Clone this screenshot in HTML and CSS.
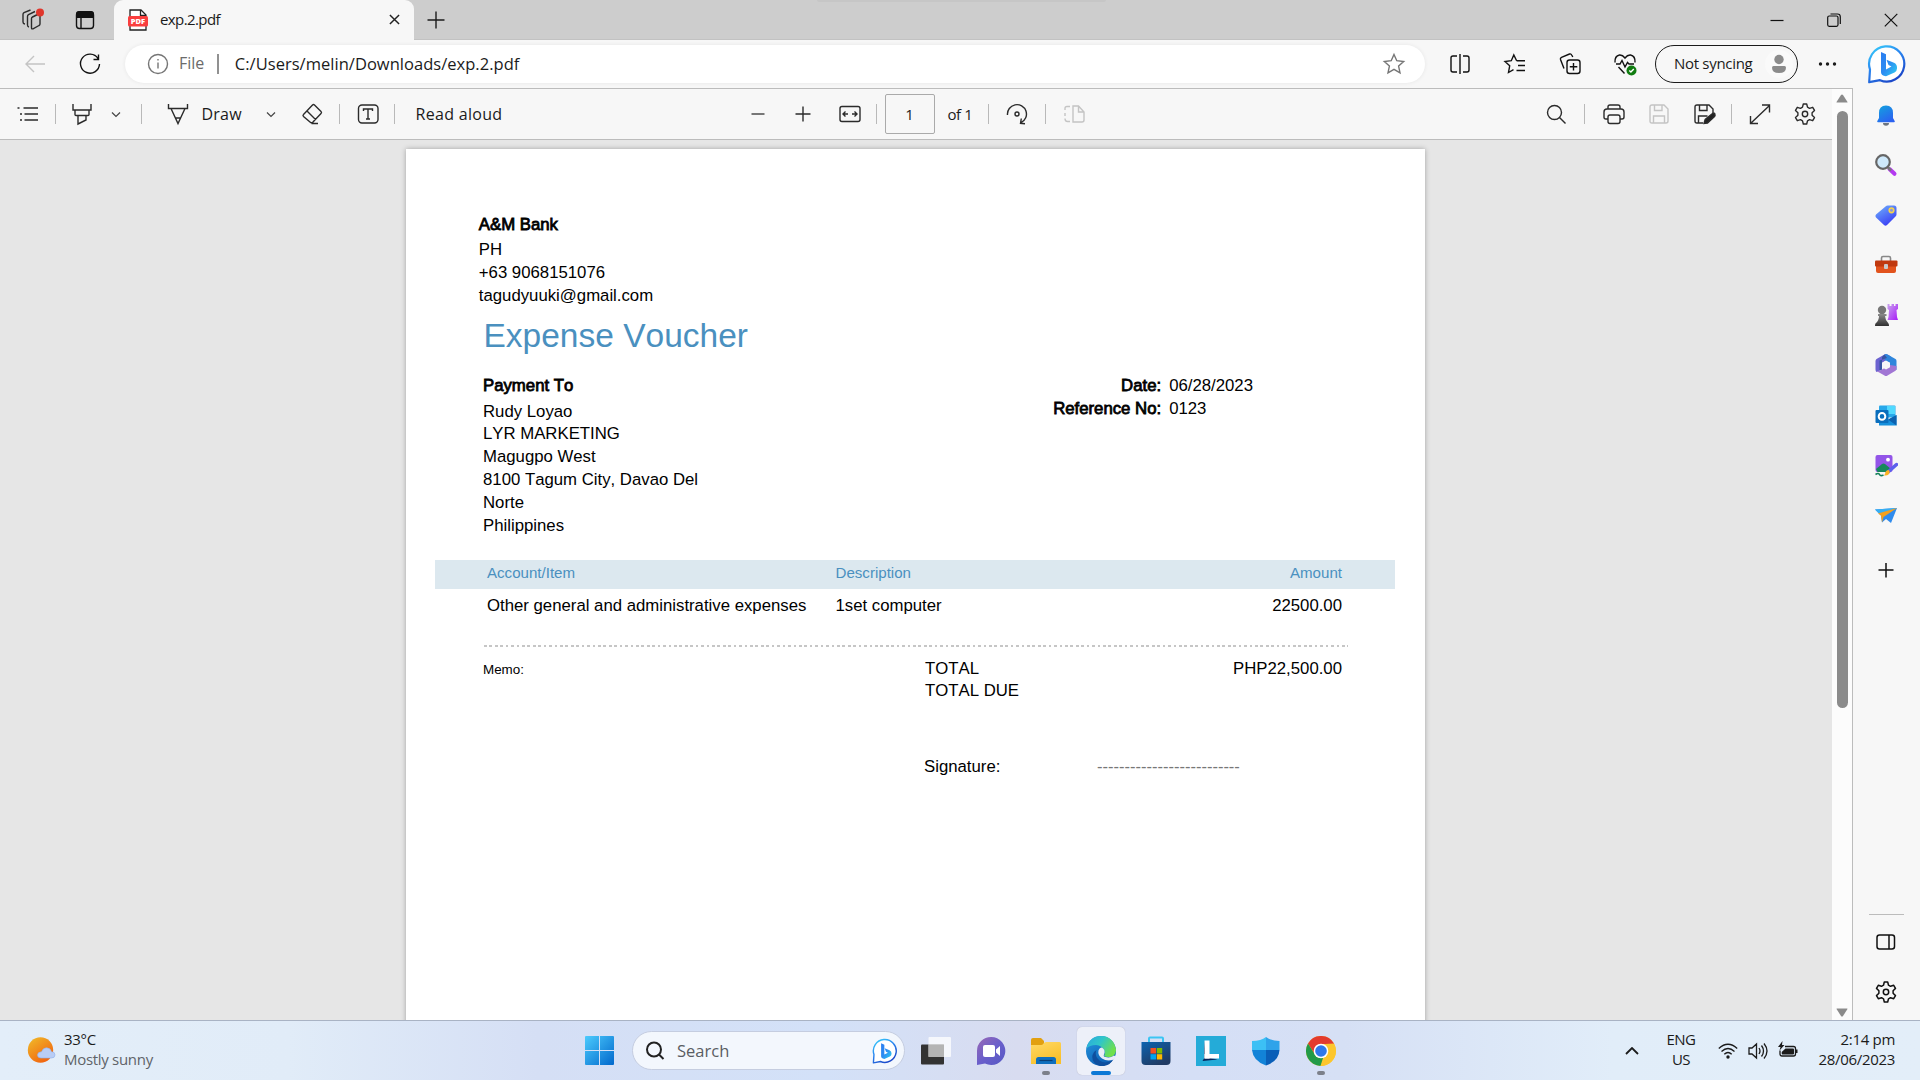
FILE: index.html
```
<!DOCTYPE html>
<html lang="en">
<head>
    <meta charset="UTF-8">
    <meta name="viewport" content="width=device-width, initial-scale=1.0">
    <title>exp.2.pdf</title>
    <link rel="stylesheet" href="styles.css">
</head>
<body>
    <!-- shared icons -->
    <svg class="defs" width="0" height="0">
        <defs>
            <linearGradient id="gBing" x1="0" y1="0" x2="0.6" y2="1">
                <stop offset="0" stop-color="#37d2fb"/><stop offset="0.5" stop-color="#2a86f0"/><stop offset="1" stop-color="#1b48c9"/>
            </linearGradient>
            <linearGradient id="gB" x1="0" y1="0" x2="1" y2="1">
                <stop offset="0" stop-color="#2b7cf0"/><stop offset="0.5" stop-color="#2c8df2"/><stop offset="1" stop-color="#2fd0f0"/>
            </linearGradient>
            <linearGradient id="gBell" x1="0" y1="0" x2="0.6" y2="1">
                <stop offset="0" stop-color="#12a5de"/><stop offset="1" stop-color="#2b62f0"/>
            </linearGradient>
            <linearGradient id="gTag" x1="0" y1="0" x2="0.6" y2="1">
                <stop offset="0" stop-color="#70b4fb"/><stop offset="1" stop-color="#3b3ff5"/>
            </linearGradient>
            <linearGradient id="gWin" x1="0" y1="0" x2="1" y2="1">
                <stop offset="0" stop-color="#4ccbfd"/><stop offset="1" stop-color="#0168cc"/>
            </linearGradient>
            <linearGradient id="gSun" x1="0" y1="0" x2="0.7" y2="1">
                <stop offset="0" stop-color="#f0bd2a"/><stop offset="1" stop-color="#f1620f"/>
            </linearGradient>
            <linearGradient id="gChat" x1="0" y1="0" x2="1" y2="1">
                <stop offset="0" stop-color="#9a68b4"/><stop offset="0.5" stop-color="#6a5fcb"/><stop offset="1" stop-color="#5558c4"/>
            </linearGradient>
            <linearGradient id="gFolder" x1="0" y1="0" x2="0.5" y2="1">
                <stop offset="0" stop-color="#ffd966"/><stop offset="1" stop-color="#f9c02b"/>
            </linearGradient>
            <linearGradient id="gEdge" x1="0" y1="0" x2="1" y2="0.5">
                <stop offset="0" stop-color="#2aa7e0"/><stop offset="0.5" stop-color="#30c6c8"/><stop offset="1" stop-color="#70e04b"/>
            </linearGradient>
            <linearGradient id="gEdge2" x1="0" y1="0" x2="0.6" y2="1">
                <stop offset="0" stop-color="#2598e0"/><stop offset="1" stop-color="#0d5fb4"/>
            </linearGradient>
            <linearGradient id="gStore" x1="0" y1="0" x2="0.6" y2="1">
                <stop offset="0" stop-color="#0c63b0"/><stop offset="1" stop-color="#203a63"/>
            </linearGradient>
            <linearGradient id="gPurple" x1="0" y1="0" x2="1" y2="1">
                <stop offset="0" stop-color="#c9a4ee"/><stop offset="1" stop-color="#a81cf7"/>
            </linearGradient>
            <linearGradient id="gPawn" x1="0" y1="0" x2="0" y2="1">
                <stop offset="0" stop-color="#8c8c8c"/><stop offset="1" stop-color="#303030"/>
            </linearGradient>
            <symbol id="chevron" viewBox="0 0 16 16"><path d="M4 6.500l4 4 4-4"/></symbol>
            <symbol id="gear" viewBox="0 0 24 24">
                <path d="M10.300 2h3.400l.8 3.200 2 1.100 3.200-1 1.800 3.100-2.400 2.300v2.600l2.400 2.300-1.800 3.100-3.200-1-2 1.100-.8 3.200h-3.400l-.8-3.200-2-1.100-3.200 1-1.800-3.100 2.400-2.300v-2.600L2.500 8.400l1.800-3.100 3.200 1 2-1.100z" stroke-linejoin="round"/>
                <circle cx="12" cy="12" r="2.700"/>
            </symbol>
            <symbol id="bing" viewBox="0 0 40 40">
                <path d="M2.200 38.200L3 25.500A17.600 17.600 0 1 1 13 36.200Z" fill="#fff" stroke="url(#gBing)" stroke-width="2.200" stroke-linejoin="round"/>
                <path d="M14 8l5 2.200v15.300l5.500-3-3-1.500-2-5.200 7.500 3q3 1.500 3 4.700v1q0 2.500-2.500 4L19 32.200q-5-.5-5-4z" fill="url(#gB)"/>
            </symbol>
        </defs>
    </svg>

    <div class="tabstrip">
        <span class="screen-edge"></span>
        <svg class="icon workspaces" viewBox="0 0 24 24">
            <path d="M11.500 10.500q0-1 1-1.500l6-3q1.500-.5 1.500 1v9q0 1-1 1.500l-6 3.300q-1.500.5-1.500-1zM9 19q-1.500-.3-1.500-2V8.500q0-1.200 1-1.800L15 3.500M5 16q-2-.2-2-2V6.500q0-1.200 1-1.800L10.500 2"/>
            <circle class="red-dot" cx="20" cy="4.500" r="4"/>
        </svg>
        <svg class="icon tab-actions" viewBox="0 0 24 24">
            <rect x="3.500" y="4" width="17" height="16.500" rx="3"/>
            <path d="M8 9v11"/>
            <path class="ink" d="M3 10V6q0-3 3-3h12q3 0 3 3v4z"/>
        </svg>
        <div class="tab">
            <svg class="pdf-icon" viewBox="0 0 20 22">
                <path d="M2 1h11l5 5v15H2z" fill="#fff" stroke="#222" stroke-width="1.300"/>
                <path d="M12.500 1v5.500H18" fill="none" stroke="#222" stroke-width="1.300"/>
                <rect x="0" y="7" width="20" height="10.500" rx="1.500" fill="#fa3e3e"/>
                <text x="10" y="15" text-anchor="middle">PDF</text>
            </svg>
            <span class="tab-title">exp.2.pdf</span>
            <svg class="tab-close" viewBox="0 0 12 12"><path d="M1 1l10 10M11 1L1 11"/></svg>
        </div>
        <svg class="new-tab" viewBox="0 0 18 18"><path d="M9 0.500v17M0.500 9h17"/></svg>
        <div class="window-buttons">
            <svg viewBox="0 0 14 14"><path d="M0.500 7.500h13"/></svg>
            <svg viewBox="0 0 14 14"><rect x="0.700" y="3" width="10.300" height="10.300" rx="1.500"/><path d="M3.500 1h7q2.800 0 2.800 2.800V11"/></svg>
            <svg viewBox="0 0 14 14"><path d="M0.800 0.800l12.500 12.500M13.300 0.800L0.800 13.300"/></svg>
        </div>
    </div>

    <div class="navbar">
        <svg class="icon disabled" viewBox="0 0 24 24"><path d="M22 12H3M11 4l-8 8 8 8"/></svg>
        <svg class="icon dark" viewBox="0 0 24 24"><path d="M20 6.500A9.500 9.500 0 1 0 21.500 12M20.500 2.500v5h-5"/></svg>
        <div class="address">
            <svg class="icon info" viewBox="0 0 24 24"><circle cx="12" cy="12" r="9.500"/><path d="M12 10.500v6M12 7v1.500"/></svg>
            <span class="scheme">File</span>
            <span class="address-sep"></span>
            <span class="url">C:/Users/melin/Downloads/exp.2.pdf</span>
            <svg class="icon star" viewBox="0 0 24 24"><path d="M12 2.500l2.800 6.200 6.900.8-5.100 4.600 1.400 6.700-6-3.400-6 3.400 1.400-6.700-5.100-4.600 6.900-.8z"/></svg>
        </div>
        <svg class="icon dark" viewBox="0 0 24 24"><path d="M9 4H5Q3 4 3 6v12q0 2 2 2h4M12 2v20M15 4h4q2 0 2 2v12q0 2-2 2h-4"/></svg>
        <svg class="icon dark" viewBox="0 0 24 24"><path d="M13.500 8.500L10.800 3 8.300 8.700 2 9.500l4.700 4.300L5.500 20.500 10.500 17.700M14 8.800h8M15 13.500h7M13.500 18.500H22M13.500 8.500l.5.300"/></svg>
        <svg class="icon dark" viewBox="0 0 24 24"><rect x="9" y="8" width="13" height="13.500" rx="2.500"/><path d="M15.500 11v7.500M11.800 14.800h7.500M6 16.500l-3.500-9Q2 6 3.500 5.300L11.500 2q1.500-.5 2.200 1L14.800 5"/></svg>
        <svg class="icon dark" viewBox="0 0 24 24">
            <path d="M2 10.500Q1.500 4 6.500 3q3-.3 5.500 3 2.500-3.300 5.500-3 5 1 4.500 7.500M3 12h4l2-3.500 3 6.500 2.500-4.500L16 12h5M5.500 15l6 6.500"/>
            <circle cx="18.500" cy="18.500" r="5" fill="#107c10" stroke="none"/>
            <path d="M16.300 18.600l1.600 1.500 2.900-3" class="tick"/>
        </svg>
        <div class="profile">
            <span>Not syncing</span>
            <svg viewBox="0 0 28 28"><circle cx="14" cy="14" r="14" fill="#fafafa"/><circle cx="14" cy="9.500" r="4.700" fill="#8b8b8b"/><path d="M7 17.500q0-1.500 1.500-1.500h11q1.500 0 1.500 1.500 0 5.500-7 5.500t-7-5.500z" fill="#8b8b8b"/></svg>
        </div>
        <svg class="icon dots" viewBox="0 0 24 24"><circle cx="4.500" cy="12" r="1.700"/><circle cx="11.500" cy="12" r="1.700"/><circle cx="18.500" cy="12" r="1.700"/></svg>
        <svg class="bing-big"><use href="#bing"/></svg>
    </div>

    <div class="main">
        <div class="viewer">
            <div class="pdfbar">
                <svg class="icon" viewBox="0 0 24 24"><path d="M7.500 6H22M8.500 12H22M8.500 18H22M1.500 6h2M4 12h2M4 18h2"/></svg>
                <i></i>
                <svg class="icon" viewBox="0 0 24 24"><path d="M3 2v6h18V2M5 8v4.500q0 1 1 1h12q1 0 1-1V8M8 13.500V22l8-4v-4.500"/></svg>
                <svg class="small"><use href="#chevron"/></svg>
                <i></i>
                <svg class="icon" viewBox="0 0 24 24"><path d="M2.500 2v4.500H21.500V2M5 6.500L12 21.500 19 6.500M9.500 16h5"/></svg>
                <span class="draw">Draw</span>
                <svg class="small"><use href="#chevron"/></svg>
                <svg class="icon" viewBox="0 0 24 24"><path d="M14.500 3L21 9.500q1 1 0 2L13 20q-1.500 1.500-3 0L3.500 14.500q-1-1 0-2L12.500 3q1-1 2 0zM7 9l8.500 8.500M11.500 21.500H18"/></svg>
                <i></i>
                <svg class="icon" viewBox="0 0 24 24"><rect x="2.500" y="3" width="19.500" height="18" rx="3.500"/><path d="M7.500 9V7h9v2M12 7v10M10 17h4"/></svg>
                <i></i>
                <span class="read">Read aloud</span>
                <svg class="icon minus" viewBox="0 0 24 24"><path d="M5.500 12h13"/></svg>
                <svg class="icon" viewBox="0 0 24 24"><path d="M12 4.500v15M4.500 12h15"/></svg>
                <svg class="icon" viewBox="0 0 24 24"><rect x="2" y="4.500" width="20" height="15" rx="2"/><path d="M10 12H5M7.500 9.500L5 12l2.500 2.500M14 12h5M16.500 9.500L19 12l-2.500 2.500"/></svg>
                <i></i>
                <span class="page-input">1</span>
                <span class="page-count">of 1</span>
                <i></i>
                <svg class="icon" viewBox="0 0 24 24"><path d="M2.500 13A9.500 9.500 0 1 1 16 20.700M16.300 16.500L15.500 21.300l4.500.5"/><circle cx="12" cy="12" r="2"/></svg>
                <i></i>
                <svg class="icon disabled" viewBox="0 0 24 24"><path d="M11 4v16h9q2 0 2-2v-8l-5.500-6zM16.500 4v6H22M8 4.500H5q-2 0-2 2V8M3 11v3M3 16.500q0 3 2.500 3H8"/></svg>
                <svg class="icon" viewBox="0 0 24 24"><circle cx="10.500" cy="10.500" r="7"/><path d="M15.500 15.500l6 6"/></svg>
                <i></i>
                <svg class="icon" viewBox="0 0 24 24"><path d="M6 17H4q-2 0-2-2v-5q0-3 3-3h14q3 0 3 3v5q0 2-2 2h-2M6 7V5q0-2 2-2h8q2 0 2 2v2"/><rect x="6" y="13" width="12" height="8.500" rx="2"/></svg>
                <svg class="icon disabled" viewBox="0 0 24 24"><path d="M3 5q0-2 2-2h12l4 4v12q0 2-2 2H5q-2 0-2-2zM7.500 3v5.500H15V3M6.500 21v-7h11v7"/></svg>
                <svg class="icon" viewBox="0 0 24 24"><path d="M11 21H5q-2 0-2-2V5q0-2 2-2h12l4 4v4M7.500 3v5.500H15V3M6.500 21v-7h9"/><path d="M12 21.500l1.200-4 7.300-6q2-1 2.500 1 .3 1-.5 2l-7 6.500z" fill="#222"/></svg>
                <i></i>
                <svg class="icon" viewBox="0 0 24 24"><path d="M2.500 21.500l19-18M14 3h7.500v7.500M2.500 14v7.500H10"/></svg>
                <svg class="icon"><use href="#gear"/></svg>
            </div>
            <div class="canvas">
                <div class="page">
                    <div class="company">
                        <div class="strong">A&amp;M Bank</div>
                        <div>PH</div>
                        <div>+63 9068151076</div>
                        <div>tagudyuuki@gmail.com</div>
                    </div>
                    <h1>Expense Voucher</h1>
                    <div class="parties">
                        <div class="payee">
                            <div class="strong">Payment To</div>
                            <div>Rudy Loyao</div>
                            <div>LYR MARKETING</div>
                            <div>Magugpo West</div>
                            <div>8100 Tagum City, Davao Del</div>
                            <div>Norte</div>
                            <div>Philippines</div>
                        </div>
                        <div class="meta">
                            <span class="strong">Date:</span><span>06/28/2023</span>
                            <span class="strong">Reference No:</span><span>0123</span>
                        </div>
                    </div>
                    <div class="row head"><span>Account/Item</span><span>Description</span><span>Amount</span></div>
                    <div class="row"><span>Other general and administrative expenses</span><span>1set computer</span><span>22500.00</span></div>
                    <div class="dotted"></div>
                    <div class="totals">
                        <span class="memo">Memo:</span><span>TOTAL</span><span class="sum">PHP22,500.00</span>
                        <span></span><span>TOTAL DUE</span><span></span>
                    </div>
                    <div class="signature"><span>Signature:</span><span class="sign-line">--------------------------</span></div>
                </div>
            </div>
        </div>
        <div class="scrollbar">
            <svg viewBox="0 0 12 9"><path d="M6 0.500q.6 0 1 .5l4.500 7q.2.500-.5.500H1q-.7 0-.5-.5L5 1q.4-.5 1-.5z"/></svg>
            <div class="thumb"></div>
            <svg class="down" viewBox="0 0 12 9"><path d="M6 8.500q.6 0 1-.5l4.500-7q.2-.500-.5-.5H1q-.7 0-.5.5L5 8q.4.500 1 .5z"/></svg>
        </div>
        <div class="sidebar">
            <svg viewBox="0 0 24 24"><path d="M9 20h6q0 2.800-3 2.800T9 20z" fill="#6c7480"/><path d="M12 2.500q7 0 7 7.500v5l1.800 3.300q.2 1-.8 1H4q-1 0-.8-1L5 15v-5q0-7.500 7-7.500z" fill="url(#gBell)"/></svg>
            <svg viewBox="0 0 24 24"><path d="M15.500 16l5 4.800" stroke="#b43af0" stroke-width="4" stroke-linecap="round"/><path d="M14 14.500l3 3" stroke="#777" stroke-width="2.500"/><circle cx="9" cy="9" r="6.800" fill="#cfe9fb" stroke="#666" stroke-width="2.200"/></svg>
            <svg viewBox="0 0 24 24"><path d="M11.500 3.500q1-1 2.200-1H20q2.500 0 2.500 2.500v6.500q0 1-1 2l-8.500 8.500q-1.500 1.300-3 0L2 14.500q-1.300-1.500 0-3z" fill="url(#gTag)"/><circle cx="17.500" cy="7.300" r="2.300" fill="#8d98d8" stroke="#f8d34a" stroke-width="1.600"/></svg>
            <svg viewBox="0 0 24 24"><path d="M7.500 8V5q0-1.500 1.500-1.500h6q1.500 0 1.500 1.500v3" fill="none" stroke="#888" stroke-width="1.600"/><path d="M2 11h20v7q0 2-2 2H4q-2 0-2-2z" fill="#e2531d"/><rect x="1" y="7.500" width="22.500" height="6" rx="1" fill="#c0390f"/><rect x="10" y="11" width="4" height="5" rx="1" fill="#c9c9c9"/></svg>
            <svg viewBox="0 0 24 24"><path d="M13.500 1h2v2h2V1h2.500v2h1.500V1H24v5l-1.500 1 .5 7 1 3H13.500l1-3 .5-7-1.500-1z" fill="url(#gPurple)"/><circle cx="8" cy="7" r="4.200" fill="#777"/><path d="M4 11h8.500v2H11q.3 4.500 3.500 7.500.500.500.5 2.500H1q0-2 .5-2.500Q5 17.500 5 13H4z" fill="url(#gPawn)"/></svg>
            <svg viewBox="0 0 24 24"><path d="M10.500 1.500q1.500-1 3 0L17 3.500l-6 4.500-3 2v6.500L2.500 19q-1-1-1-2.500V8q0-1.200 1-2z" fill="#6c63d0"/><path d="M10.500 1.500q1.500-1 3 0l8 4.500q1 .7 1 2v9l-6.500-2V10L11 7.500z" fill="#2f86dc"/><path d="M22.500 15.500q0 1.500-1 2.200l-8 4.800q-1.500 1-3 0l-8-4.500q2 .5 5.500-1.500l8-4.500 6.500 1z" fill="#a176d4"/><path d="M10.500 1.500L8 4v12.500l-2.500 1V7.500L13 5z" fill="#3855a3"/><path d="M12 7.500l4 2.200v4.600l-4 2.200-4-2.200V9.700z" fill="#f7f7f7"/></svg>
            <svg viewBox="0 0 24 24"><rect x="5" y="1.500" width="16.500" height="12" rx="1" fill="#28a8ea"/><path d="M13 2h8v8h-8z" fill="#50d9ff"/><path d="M5 21.500V12l9 4 8.500-5v10.500z" fill="#1590dc"/><path d="M14 15.500l8.500-4.500v10.500z" fill="#0b61b0"/><rect x="1.500" y="6" width="13" height="13" rx="1" fill="#0a6ebd"/><circle cx="8" cy="12.400" r="3.300" fill="none" stroke="#fff" stroke-width="2"/></svg>
            <svg viewBox="0 0 24 24"><rect x="1.500" y="1" width="17" height="17" rx="2" fill="#9355e8"/><circle cx="14" cy="5.700" r="1.900" fill="#fff"/><path d="M2 15l6-5q1.500-1 3 0l6 5-1 3H3.500z" fill="#16895b"/><path d="M22.500 10.500l-9 8" stroke="#5d60ec" stroke-width="3.500" stroke-linecap="round"/><path d="M14.500 16q2 1.500.5 4-2 2-5 1.500 1.500-2 1.500-3.500 1-2 3-2z" fill="#fbb322"/><path d="M1.500 20.500q3-2 4 0 1 2 4 .5" stroke="#14805a" stroke-width="1.600" fill="none"/></svg>
            <svg viewBox="0 0 24 24"><path d="M1 5.500L23 4l-6 15-5-4-4 3.500-1-7z" fill="#2f8bed"/><path d="M1 5.500L23 4 7 11.500z" fill="#37aef2"/><path d="M4 9.500L23 4 9.500 13l-1.500 5.500-1-7z" fill="#f5a01c"/></svg>
            <svg class="line" viewBox="0 0 24 24"><path d="M12 5v14.500M4.500 12h15"/></svg>
            <span class="side-sep"></span>
            <svg class="line" viewBox="0 0 24 24"><rect x="3" y="5" width="17.500" height="14" rx="2.500"/><path d="M15 5v14"/></svg>
            <svg class="line"><use href="#gear"/></svg>
        </div>
    </div>

    <div class="taskbar">
        <div class="weather">
            <svg viewBox="0 0 30 28"><circle cx="13.500" cy="14" r="12.700" fill="url(#gSun)"/><path d="M14 22q-3.500 0-3.500-3t4-3.200q1.500-4 5-4 4 0 5 4 3.500 0 3.500 3.100T24.500 22z" fill="#b9cdf5" stroke="#8fb0ec" stroke-width="0.600"/></svg>
            <div><div>33°C</div><div class="muted">Mostly sunny</div></div>
        </div>
        <svg class="start" viewBox="0 0 29 29"><path d="M0 1q0-1 1-1h13v14H0zM15 0h13q1 0 1 1v13H15zM0 15h14v14H1q-1 0-1-1zM15 15h14v13q0 1-1 1H15z" fill="url(#gWin)"/></svg>
        <div class="search">
            <svg class="magnifier" viewBox="0 0 20 20"><circle cx="9" cy="8.500" r="7"/><path d="M14 13.500l4.500 4.500"/></svg>
            <span>Search</span>
            <svg class="bing-small" viewBox="0 0 40 40"><use href="#bing"/></svg>
        </div>
        <div class="apps">
            <span><svg viewBox="0 0 30 30"><rect y="8.500" width="23" height="20" rx="1" fill="#333"/><rect x="7.500" y="1" width="22.500" height="20" rx="1" fill="#fff" opacity="0.750"/><path d="M7.500 8.500H23V21H7.500z" fill="#b4b4b4"/></svg></span>
            <span><svg viewBox="0 0 30 30"><path d="M15 1a14 14 0 1 1-6 26.500L1 29V15A14 14 0 0 1 15 1z" fill="url(#gChat)"/><rect x="7" y="9" width="12" height="12" rx="2" fill="#fff"/><path d="M20 13.500l4-3.500v10l-4-3.500z" fill="#fff"/></svg></span>
            <span><svg viewBox="0 0 30 30"><path d="M0 4q0-2 2-2h8l3 3v6H0z" fill="#e2a010"/><path d="M0 9h10q1.500 0 2.500-1.500T15 6h13.500q1.500 0 1.500 1.500V28H0z" fill="url(#gFolder)"/><path d="M5 28v-4.500Q5 21 7.500 21h15q2.500 0 2.500 2.500V28z" fill="#0f6fbe"/><path d="M8.500 24.500h13" stroke="#0a3f76" stroke-width="1.200"/></svg><b></b></span>
            <span class="active"><svg viewBox="0 0 30 30"><circle cx="15" cy="15" r="15" fill="url(#gEdge2)"/><path d="M.5 12.500Q3 0 15.500 0 27.500.5 30 13.500q.2 5.500-4.500 7.300-6 1-7.500-1.300 1.500-2 .5-5Q16 9.500 10 9 3.500 9 .5 12.500z" fill="url(#gEdge)"/><path d="M10.500 14Q8 20 13.500 24.500q6 4 13.500-.5Q22.500 31 14 30 5 27 6.500 19q1-3.500 4-5z" fill="#0f4f9e"/><path d="M16 11.500q4 2.500 2 7-1 2 1.500 2.500 4.500 1.300 8.500-1.500l2 1-2 3q-7 2.500-12-1-4.500-3.500-3.500-8 1-3 3.500-3z" fill="#e9ecf8"/></svg><b></b></span>
            <span><svg viewBox="0 0 30 30"><path d="M8 7V2.500Q8 1.500 9 1.500h12q1 0 1 1V7" fill="none" stroke="#3cc5f3" stroke-width="2"/><path d="M.5 6h29v19q0 4-4 4h-21q-4 0-4-4z" fill="url(#gStore)"/><path d="M9.500 12H15v5.500H9.500z" fill="#f25022"/><path d="M15.800 12h5.400v5.500h-5.400z" fill="#7fba00"/><path d="M9.500 18.200H15v5.300H9.500z" fill="#00a4ef"/><path d="M15.800 18.200h5.400v5.300h-5.400z" fill="#ffb900"/></svg></span>
            <span><svg viewBox="0 0 30 30"><rect width="30" height="30" fill="#24abd8"/><path d="M8 4.500v18L6.500 25l15-1.500L10 21z" fill="#06245a"/><rect x="8.500" y="4.500" width="5" height="18" fill="#fff"/><rect x="8.500" y="18" width="14.500" height="4.500" fill="#fff"/></svg></span>
            <span><svg viewBox="0 0 30 30"><path d="M15 1q5 4 13.500 4v9H15z" fill="#2fa3ea"/><path d="M15 1Q10 5 1 5v9h14z" fill="#3cc0f5"/><path d="M1 14h14v15.500Q2 25 1 14z" fill="#1283d8"/><path d="M28.500 14H15v15.500Q28 25 28.500 14z" fill="#0a5fb8"/></svg></span>
            <span><svg viewBox="0 0 30 30"><circle cx="15" cy="15" r="15" fill="#fcc934"/><path d="M2 7.500A15 15 0 0 1 28 7.500L28 8H15L9 18.500z" fill="#e33b2e"/><path d="M2 7.500L8.900 18.500q2 3.500 6.100 3.500h2L14.500 30A15 15 0 0 1 2 7.500z" fill="#229a48"/><path d="M28 7.500q2 3.700 2 7.500A15 15 0 0 1 14.500 30L21 18.500q2-5-2-10.500z" fill="#fcc62d"/><circle cx="15" cy="15" r="7.300" fill="#fff"/><circle cx="15" cy="15" r="5.800" fill="#2f78ea"/></svg><b></b></span>
        </div>
        <div class="tray">
            <svg class="up" viewBox="0 0 14 8"><path d="M1 7l6-6 6 6"/></svg>
            <div class="lang"><div>ENG</div><div>US</div></div>
            <svg class="tray-icon" viewBox="0 0 20 20"><path d="M.800 7.500Q10-1 19.200 7.500M3.500 10.500q6.500-6 13 0M6.300 13.300q3.700-3.500 7.400 0"/><circle cx="10" cy="16" r="1.700" fill="#1b1b1b" stroke="none"/></svg>
            <svg class="tray-icon" viewBox="0 0 20 20"><path d="M1 7h3l4.500-4v14L4 13H1zM11 7q2 3 0 6M13.500 4.500q4 5.500 0 11M16 2.500q6 7.500 0 15"/></svg>
            <svg class="tray-icon" viewBox="0 0 20 20"><path d="M7 5.500h8.500q2 0 2 2v5.500q0 2-2 2H4q-2 0-2-2V9.500"/><path d="M7.500 7.500H15q1 0 1 1v4q0 1-1 1H4.500q-.8 0-.8-1V11zM18 8.500h1.500v3.500H18zM4.500 0L0 6h2.500L1.500 9.500 6.500 4H4z" fill="#1b1b1b" stroke="none"/></svg>
            <div class="clock"><div>2:14 pm</div><div>28/06/2023</div></div>
        </div>
    </div>
</body>
</html>
```
FILE: styles.css
```
* {
    box-sizing: border-box;
}
body {
    margin: 0;
    width: 1920px;
    height: 1080px;
    overflow: hidden;
    display: flex;
    flex-direction: column;
    background-color: #f7f7f7;
    font-family: "Open Sans", "Noto Sans", sans-serif;
    font-size: 16px;
    color: #1b1b1b;
}
svg {
    display: block;
    flex: none;
}
span {
    white-space: nowrap;
}
.defs {
    position: absolute;
}
.icon {
    width: 24px;
    height: 24px;
    fill: none;
    stroke: #2b2b2b;
    stroke-width: 1.4;
}
.dark {
    stroke: #111;
}
.disabled {
    stroke: #c4c4c4;
}

/* tab strip */
.tabstrip {
    position: relative;
    display: flex;
    align-items: center;
    flex: none;
    height: 40px;
    padding-left: 20px;
    background-color: #cdcdcd;
    border-bottom: 1px solid #c2c2c2;
}
.screen-edge {
    position: absolute;
    left: 817px;
    top: 0;
    width: 289px;
    height: 2px;
    background-color: #c6c6c6;
    border-radius: 0 0 4px 4px;
}
.red-dot {
    fill: #e0362c;
    stroke: none;
}
.tab-actions {
    margin-left: 29px;
    stroke: #111;
}
.ink {
    fill: #111;
    stroke: none;
}
.tab {
    display: flex;
    align-items: center;
    width: 300px;
    height: 40px;
    margin: 0 0 -1px 17px;
    padding: 0 14px 1px 14px;
    background-color: #f7f7f7;
    border-radius: 9px 9px 0 0;
}
.pdf-icon {
    width: 20px;
    height: 22px;
}
.pdf-icon text {
    font-size: 7.5px;
    font-weight: 800;
    fill: #fff;
}
.tab-title {
    margin-left: 12px;
    font-size: 15px;
    line-height: 20px;
    margin-bottom: 1px;
    letter-spacing: -0.6px;
}
.tab-close {
    width: 11px;
    height: 11px;
    margin-left: auto;
    stroke: #222;
    stroke-width: 1.6;
}
.new-tab {
    width: 18px;
    height: 18px;
    margin-left: 13px;
    stroke: #1b1b1b;
    stroke-width: 1.4;
}
.window-buttons {
    display: flex;
    gap: 43px;
    margin: 0 22px 0 auto;
}
.window-buttons svg {
    width: 14px;
    height: 14px;
    fill: none;
    stroke: #111;
    stroke-width: 1.2;
}

/* address row */
.navbar {
    display: grid;
    grid-template-columns: 55px 47px 1323px 55px 55px 55px 42px 161px 51px auto;
    align-items: center;
    flex: none;
    height: 48px;
    padding-left: 23px;
}
.address {
    display: flex;
    align-items: center;
    width: 1300px;
    height: 38px;
    padding: 0 19px 0 21px;
    background-color: #fff;
    border-radius: 19px;
    box-shadow: 0 0 4px rgba(0, 0, 0, 0.07);
}
.info, .star {
    stroke: #757575;
}
.scheme, .url, .profile span {
    margin-bottom: 2px;
}
.scheme {
    margin-left: 9px;
    color: #6b6b6b;
}
.address-sep {
    width: 1.5px;
    height: 20px;
    margin: 0 16px 0 13px;
    background-color: #919191;
}
.url {
    font-size: 16.5px;
    letter-spacing: 0.03px;
}
.star {
    margin-left: auto;
}
.tick {
    stroke: #fff;
}
.profile {
    display: flex;
    align-items: center;
    justify-content: space-between;
    width: 143px;
    height: 38px;
    padding: 0 4px 0 18px;
    border: 1.5px solid #1b1b1b;
    border-radius: 19px;
    font-size: 15px;
    letter-spacing: -0.3px;
}
.profile svg {
    width: 28px;
    height: 28px;
}
.dots {
    fill: #1b1b1b;
    stroke: none;
}
.bing-big {
    width: 40px;
    height: 40px;
}

/* viewer */
.main {
    display: flex;
    flex: 1;
    min-height: 0;
}
.viewer {
    display: flex;
    flex-direction: column;
    width: 1832px;
    border-top: 1px solid #bcbcbc;
}
.pdfbar {
    display: grid;
    grid-template-columns: 39px 15px 38px 33px 25px 36px 61px 37px 39px 17px 38px 22px 330px 45px 47px 38px 9px 63px 40px 17px 40px 17px 482px 40px 18px 45px 45px 39px 17px 45px auto;
    align-items: center;
    flex: none;
    height: 51px;
    padding-left: 15.5px;
    border-bottom: 1px solid #bcbcbc;
}
.pdfbar i {
    width: 1.5px;
    height: 20px;
    background-color: #b9b9b9;
}
.small {
    width: 16px;
    height: 16px;
    fill: none;
    stroke: #444;
    stroke-width: 1.2;
}
.draw {
    letter-spacing: 0.2px;
}
.read {
    letter-spacing: 0.3px;
}
.minus {
    stroke: #777;
    stroke-width: 2;
}
.page-input {
    width: 50px;
    height: 40px;
    border: 1px solid #aaa;
    border-radius: 2px;
    line-height: 38px;
    text-align: center;
    font-size: 15px;
}
.page-count {
    font-size: 15px;
    letter-spacing: -0.4px;
}
.canvas {
    flex: 1;
    min-height: 0;
    overflow: hidden;
    padding: 9px 0 0 406px;
    background-color: #e6e6e6;
}
.scrollbar {
    display: flex;
    flex-direction: column;
    align-items: center;
    width: 20px;
    padding: 5px 0 3px;
    background-color: #fcfcfc;
    border-top: 1px solid #bcbcbc;
}
.scrollbar svg {
    width: 12px;
    height: 9px;
    fill: #8b8b8b;
}
.scrollbar .down {
    margin-top: auto;
}
.thumb {
    width: 11px;
    height: 597px;
    margin-top: 8px;
    background-color: #8b8b8b;
    border-radius: 6px;
}
.sidebar {
    display: flex;
    flex-direction: column;
    align-items: center;
    gap: 26.1px;
    width: 68px;
    padding: 15px 1px 0 0;
    border-left: 1px solid #bcbcbc;
}
.sidebar svg {
    width: 24px;
    height: 24px;
}
.sidebar .line {
    margin-top: 4px;
    fill: none;
    stroke: #111;
    stroke-width: 1.5;
}
.side-sep {
    width: 35px;
    height: 1px;
    margin-top: auto;
    background-color: #bcbcbc;
}
.side-sep + .line {
    margin: -11px 0 0;
}
.sidebar .line:last-child {
    margin: 0 0 16px;
}

/* voucher */
.page {
    width: 1019px;
    height: 1200px;
    padding-top: 64px;
    background-color: #fff;
    box-shadow: 0 0 5px rgba(0, 0, 0, 0.3);
    font-family: "Liberation Sans", Arial, sans-serif;
    font-size: 16.75px;
    font-kerning: none;
    line-height: 23px;
    color: #000;
}
.strong {
    -webkit-text-stroke: 0.8px #000;
}
.company {
    margin-left: 72.8px;
}
.company .strong {
    margin-bottom: 2px;
}
.page h1 {
    margin: 9px 0 0 77.5px;
    font-size: 33.5px;
    font-weight: normal;
    line-height: 40px;
    color: #4a90bf;
}
.parties {
    display: grid;
    grid-template-columns: 599px auto;
    align-items: start;
    height: 186px;
    margin: 18px 0 0 77px;
}
.payee .strong {
    margin-bottom: 3px;
}
.payee div:nth-child(2) {
    margin-bottom: -1px;
}
.meta {
    display: grid;
    grid-template-columns: auto auto;
    justify-content: end;
    column-gap: 8px;
    width: 171px;
}
.meta .strong {
    text-align: right;
}
.row {
    display: grid;
    grid-template-columns: 348.500px 348px 158.500px;
    height: 56px;
    margin: 0 30px 0 29px;
    padding: 5px 0 0 52px;
}
.row span:last-child, .sum {
    text-align: right;
}
.head {
    height: 29px;
    padding-top: 1px;
    background-color: #dce8ef;
    font-size: 15.1px;
    color: #4a90bf;
}
.dotted {
    width: 864px;
    height: 2px;
    margin-left: 78px;
    background: repeating-linear-gradient(90deg, #c6c6c6 0 2.7px, transparent 2.7px 5.43px);
}
.totals {
    display: grid;
    grid-template-columns: 442px 208px 209px;
    margin: 11px 0 0 77px;
    line-height: 22px;
}
.memo {
    height: 22px;
    font-size: 13.4px;
    line-height: 24px;
}
.signature {
    display: grid;
    grid-template-columns: 173px auto;
    margin: 53px 0 0 518px;
}
.sign-line {
    font-size: 16.5px;
    color: #777;
}

/* taskbar */
.taskbar {
    display: flex;
    align-items: center;
    flex: none;
    height: 60px;
    padding: 0 25px 0 27px;
    border-top: 1px solid #a9b3c4;
    background: linear-gradient(90deg, #e3eef9 0, #e1ecf8 15%, #d5dff5 28%, #d3e1f8 43%, #d8dcf0 53%, #d5dff6 62%, #d6e0f5 70%, #e1edf9 84%, #e3eef9);
    font-size: 15px;
    line-height: 20px;
}
.weather {
    display: flex;
    width: 558px;
    margin-bottom: 4px;
    letter-spacing: -0.3px;
}
.weather svg {
    width: 30px;
    height: 28px;
    margin: 7px 7px 0 0;
}
.muted {
    color: #5f6368;
}
.start {
    width: 29px;
    height: 29px;
}
.search {
    display: flex;
    align-items: center;
    width: 273px;
    height: 39px;
    margin-left: 18px;
    padding: 0 6px 0 12px;
    background-color: #f3f7fd;
    border: 1px solid #c5cde0;
    border-radius: 20px;
    font-size: 16.5px;
    color: #5a5d63;
}
.magnifier {
    width: 20px;
    height: 20px;
    margin-right: 12px;
    fill: none;
    stroke: #222;
    stroke-width: 2;
}
.bing-small {
    width: 26px;
    height: 26px;
    margin-left: auto;
}
.apps {
    display: flex;
    gap: 7px;
    margin-left: 7px;
}
.apps span {
    position: relative;
    width: 48px;
    height: 48px;
    padding: 9px;
    border-radius: 5px;
}
.apps svg {
    width: 30px;
    height: 30px;
}
.apps .active {
    background-color: #edf0f9;
    box-shadow: 0 0 1px #aab;
}
.apps b {
    position: absolute;
    left: 20px;
    bottom: 0;
    width: 8px;
    height: 4px;
    border-radius: 2px;
    background-color: #7c808a;
}
.apps .active b {
    left: 14px;
    width: 20px;
    background-color: #0b78d6;
}
.tray {
    display: flex;
    align-items: center;
    margin-left: auto;
}
.up {
    width: 14px;
    height: 8px;
    fill: none;
    stroke: #1b1b1b;
    stroke-width: 1.8;
}
.lang, .clock {
    margin-bottom: 3px;
}
.lang {
    width: 40px;
    margin-left: 22px;
    margin-right: 17px;
    text-align: center;
    letter-spacing: -0.5px;
}
.tray-icon {
    width: 20px;
    height: 20px;
    margin-right: 10px;
    fill: none;
    stroke: #1b1b1b;
    stroke-width: 1.3;
}
.clock {
    width: 87px;
    text-align: right;
    letter-spacing: -0.3px;
}
```
